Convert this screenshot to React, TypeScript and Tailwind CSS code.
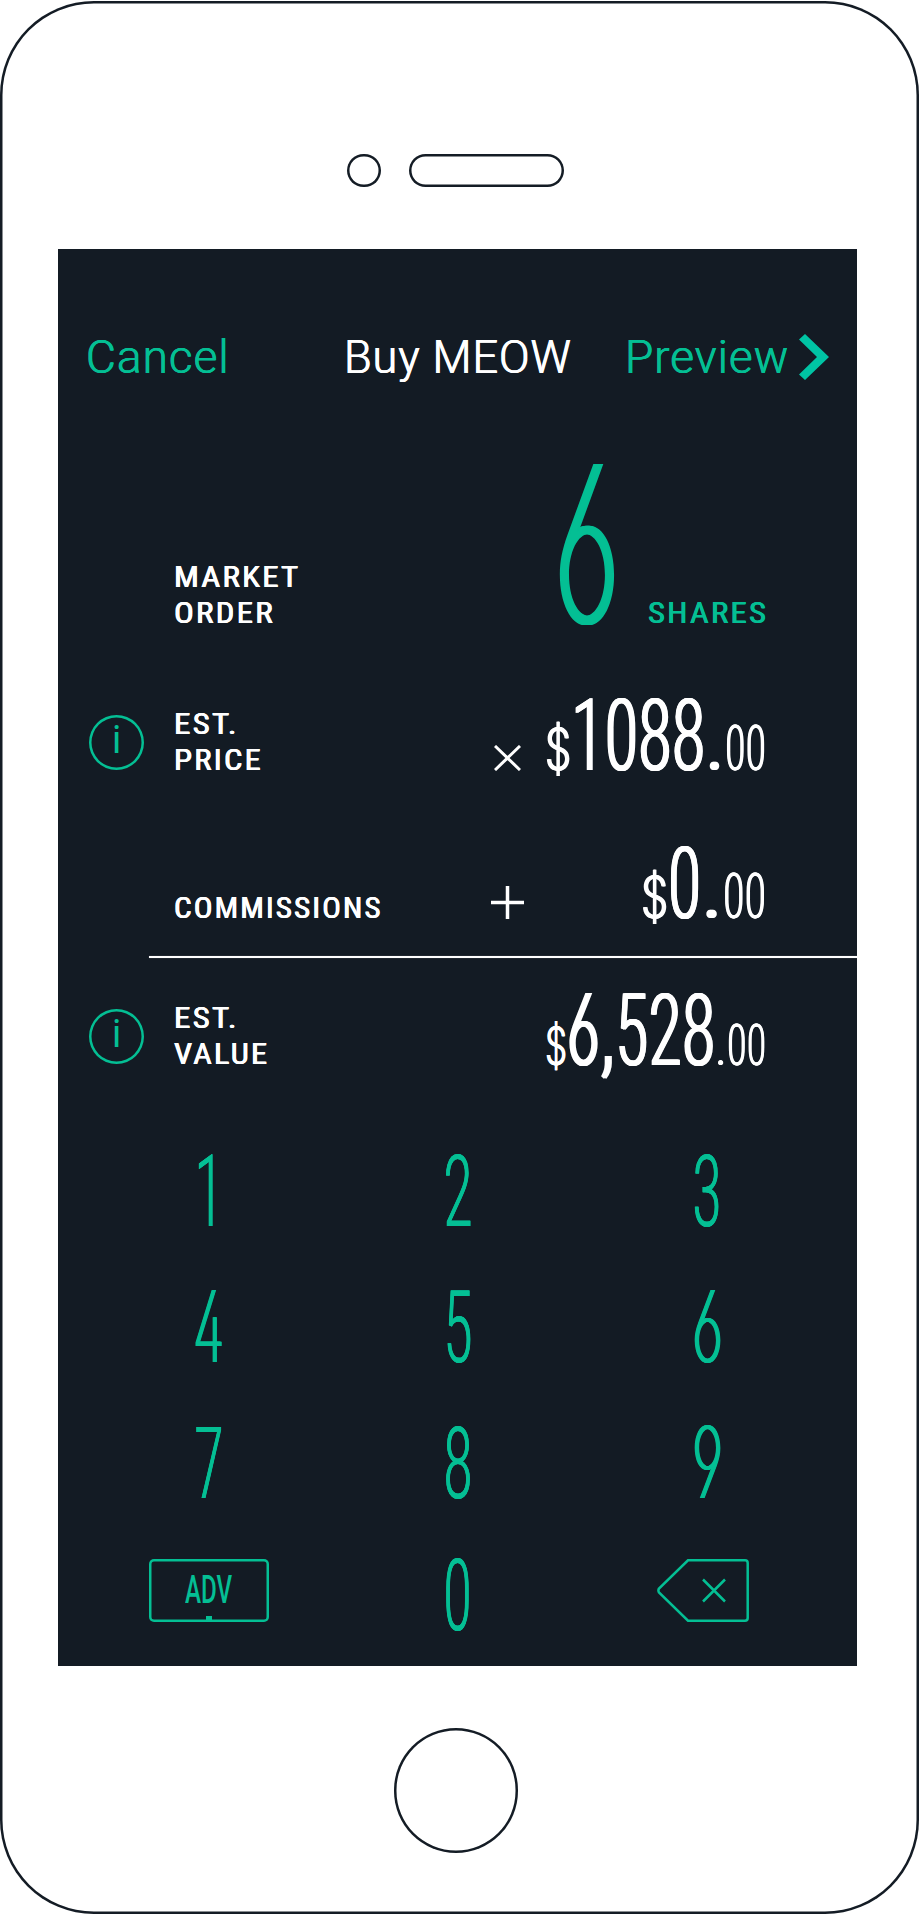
import { useLayoutEffect, useRef, useState, type ReactNode } from "react";

const SANS = "font-['Roboto',sans-serif]";
const NARROW = "font-['Roboto',sans-serif] [font-stretch:75%]";
const OPEN = "font-['Inter',sans-serif] [font-feature-settings:'ss01']";

/** Single line of text condensed or stretched horizontally to fill `width`. */
function Fit({ width, className = "", children }: { width: number; className?: string; children: ReactNode }) {
  const ref = useRef<HTMLSpanElement>(null);
  const [scale, setScale] = useState(1);
  useLayoutEffect(() => {
    if (ref.current) setScale(width / ref.current.offsetWidth);
  }, [width]);
  return (
    <span className={`block shrink-0 whitespace-nowrap ${className}`} style={{ width }}>
      <span ref={ref} className="inline-block origin-left" style={{ transform: `scaleX(${scale})` }}>
        {children}
      </span>
    </span>
  );
}

const LABEL = `${SANS} font-normal text-[30px] leading-[36px] tracking-[2px] [font-stretch:85%] [text-shadow:0.4px_0,-0.4px_0]`;
const HEAD = `${SANS} text-[47px] leading-[60px] tracking-[1px] pt-[2px] [font-stretch:90%]`;
const BIG = `${NARROW} font-light text-[101px] leading-[100px] [text-shadow:1px_0,-1px_0,1.6px_0,-1.6px_0]`;
const BIG_OPEN = `${OPEN} font-light text-[99px] leading-[100px] [text-shadow:1px_0,-1px_0,2px_0,-2px_0]`;
const POINT = `${NARROW} font-light text-[101px] leading-[100px] [text-shadow:1.5px_0,-1.5px_0]`;
const SMALL = `${NARROW} font-light text-[63px] leading-[62px] [text-shadow:0.7px_0,-0.7px_0]`;
const TINY = `${NARROW} font-light text-[58px] leading-[57px] [text-shadow:0.6px_0,-0.6px_0]`;
const DOLLAR = `${OPEN} font-light text-[59px] leading-[60px] [text-shadow:1px_0,-1px_0]`;
const DOLLAR_TINY = `${OPEN} font-light text-[54px] leading-[57px] [text-shadow:0.8px_0,-0.8px_0]`;
const KEY = `${NARROW} font-light text-[100.5px] leading-[100px] pt-[3px] [text-shadow:0.4px_0,-0.4px_0]`;
const KEY_OPEN = `${OPEN} font-extralight text-[98.5px] leading-[100px] pt-[1px] [text-shadow:1px_0,-1px_0,1.9px_0,-1.9px_0]`;

const KEYS = [
  { n: "1", open: false },
  { n: "2", open: false },
  { n: "3", open: false },
  { n: "4", open: true },
  { n: "5", open: false },
  { n: "6", open: true },
  { n: "7", open: false },
  { n: "8", open: false },
  { n: "9", open: true },
];

function Info() {
  return (
    <div className="ml-[31px] mr-[30px] flex size-[55px] shrink-0 items-center justify-center rounded-full pb-[5px] shadow-[inset_0_0_0_2.5px_#04bf94]">
      <span className={`${SANS} text-[38px] font-normal leading-none text-[#04bf94]`}>i</span>
    </div>
  );
}

export default function App() {
  return (
    <div className="flex h-[1914px] w-[920px] bg-white pt-px">
      <div className="flex h-[1913px] w-[918.5px] flex-col rounded-[94px] shadow-[inset_0_0_0_2.5px_#141c25]">
        <div className="mt-[152.5px] flex h-[33.5px] shrink-0 gap-[28px] pl-[347px]">
          <div className="size-[33.5px] rounded-full shadow-[inset_0_0_0_2.5px_#141c25]" />
          <div className="h-[33.5px] w-[155px] rounded-full shadow-[inset_0_0_0_2.5px_#141c25]" />
        </div>

        <main className="ml-[58px] mt-[62px] flex h-[1417px] w-[799px] shrink-0 flex-col bg-[#131b24] text-white">
          <header className="flex h-[213px] shrink-0 items-center">
            <Fit width={144} className={`${HEAD} ml-[28px] font-light text-[#04bf94] [text-shadow:0.4px_0,-0.4px_0]`}>Cancel</Fit>
            <Fit width={228} className={`${HEAD} ml-[114px] font-light [text-shadow:0.5px_0,-0.5px_0]`}>Buy MEOW</Fit>
            <Fit width={164} className={`${HEAD} ml-[53px] font-light text-[#04bf94] [text-shadow:0.4px_0,-0.4px_0]`}>Preview</Fit>
            <svg className="ml-[10px] mt-[3px] shrink-0" width="30" height="46" viewBox="0 0 30 46">
              <path d="M0 5.5 6 0 30 23 6 46 0 40.500 18 23Z" fill="#00c4a4" />
            </svg>
          </header>

          <section className="flex h-[169px] shrink-0 items-end">
            <div className={`${LABEL} ml-[116px] w-[380px] shrink-0`}>
              <Fit width={126}>MARKET</Fit>
              <Fit width={101}>ORDER</Fit>
            </div>
            <Fit width={66} className={`${OPEN} text-[219px] leading-[175px] font-extralight text-[#04bf94] [text-shadow:2px_0,-2px_0,4px_0,-4px_0]`}>6</Fit>
            <Fit width={120} className={`${LABEL} ml-[28px] text-[#04bf94]`}>SHARES</Fit>
          </section>

          <section className="mt-[75px] flex h-[72px] shrink-0 items-center">
            <Info />
            <div className={`${LABEL} w-[320px] shrink-0`}>
              <Fit width={65}>EST.</Fit>
              <Fit width={89}>PRICE</Fit>
            </div>
            <svg className="mt-[31px] shrink-0" width="27" height="26" viewBox="0 0 27 26" stroke="currentColor" strokeWidth="3">
              <path d="M1 1 26 25M26 1 1 25" />
            </svg>
            <div className="mb-[13px] ml-[24px] flex items-baseline">
              <Fit width={26} className={DOLLAR}>$</Fit>
              <Fit width={134} className={BIG}>1088</Fit>
              <Fit width={20} className={POINT}>.</Fit>
              <Fit width={41} className={SMALL}>00</Fit>
            </div>
          </section>

          <section className="mt-[93px] flex h-[74px] shrink-0 items-center">
            <Fit width={209} className={`${LABEL} ml-[116px]`}>COMMISSIONS</Fit>
            <svg className="mb-[12px] ml-[108px] shrink-0" width="33" height="33" viewBox="0 0 33 33" stroke="currentColor" strokeWidth="3.500">
              <path d="M16.500 0V33M0 16.500H33" />
            </svg>
            <div className="mb-[48px] ml-[117px] flex items-baseline">
              <Fit width={27} className={DOLLAR}>$</Fit>
              <Fit width={33} className={BIG}>0</Fit>
              <Fit width={22} className={POINT}>.</Fit>
              <Fit width={43} className={SMALL}>00</Fit>
            </div>
          </section>

          <div className="ml-[91px] mt-[11px] h-[2px] shrink-0 bg-white shadow-[0_0_1px_#ffffff80]" />

          <section className="mt-[42px] flex h-[72px] shrink-0 items-center">
            <Info />
            <div className={`${LABEL} w-[371px] shrink-0`}>
              <Fit width={65}>EST.</Fit>
              <Fit width={95}>VALUE</Fit>
            </div>
            <div className="mb-[12px] flex items-baseline">
              <Fit width={22} className={DOLLAR_TINY}>$</Fit>
              <Fit width={33} className={BIG_OPEN}>6</Fit>
              <Fit width={15} className={POINT}>,</Fit>
              <Fit width={100} className={BIG}>528</Fit>
              <Fit width={12} className={TINY}>.</Fit>
              <Fit width={39} className={TINY}>00</Fit>
            </div>
          </section>

          <div className="mt-[50px] grid shrink-0 auto-rows-[136px] grid-cols-3 place-items-center pl-[26px] pr-[25px] text-[#04bf94]">
            {KEYS.map(({ n, open }) => (
              <Fit key={n} width={open ? 31 : 30} className={open ? KEY_OPEN : KEY}>{n}</Fit>
            ))}
            <div className="relative mb-4 flex h-[63px] w-[120px] justify-center rounded-[5px] shadow-[inset_0_0_0_2.5px_#04bf94]">
              <Fit width={47} className={`${SANS} font-medium text-[38.5px] leading-[62px]`}>ADV</Fit>
              <div className="absolute bottom-[2px] left-1/2 h-[4px] w-[6px] -translate-x-1/2 bg-[#04bf94]" />
            </div>
            <Fit width={29} className={`${KEY} mb-2`}>0</Fit>
            <svg className="mb-4 mr-[9px]" width="92" height="63" viewBox="0 0 92 63" fill="none" stroke="#04bf94" strokeWidth="2.500">
              <path d="M31 1.300H88Q90.700 1.300 90.700 4V59Q90.700 61.700 88 61.700H31L2 33.500Q.800 31.500 2 29.500Z" />
              <path d="M46 20.500 68 42.500M68 20.500 46 42.500" />
            </svg>
          </div>
        </main>

        <div className="ml-[393.5px] mt-[62px] size-[124.5px] shrink-0 rounded-full shadow-[inset_0_0_0_2.5px_#141c25]" />
      </div>
    </div>
  );
}
